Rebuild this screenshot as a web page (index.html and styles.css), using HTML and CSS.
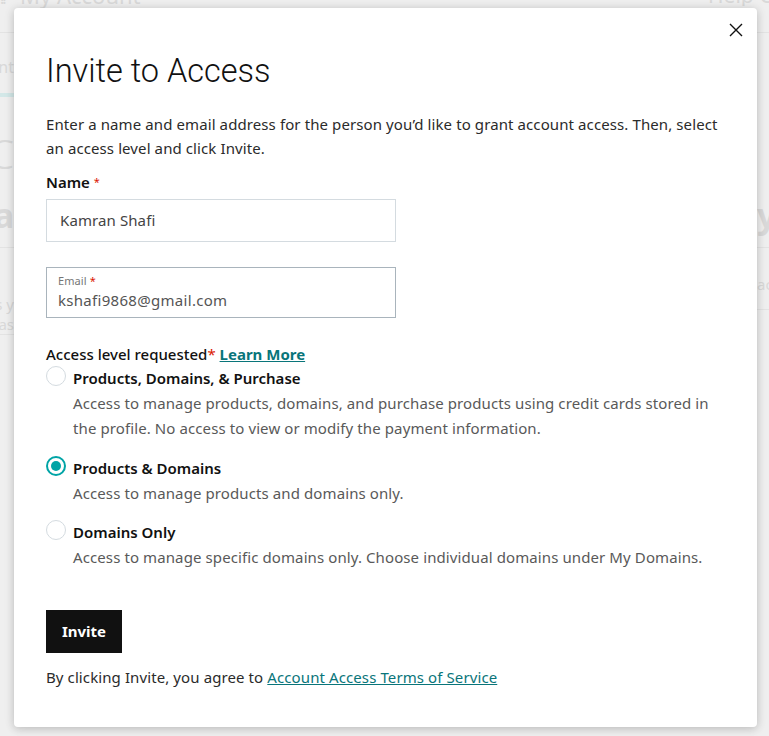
FILE: index.html
```html
<!DOCTYPE html>
<html lang="en">
<head>
<meta charset="utf-8">
<title>Invite to Access</title>
<link rel="stylesheet" href="styles.css">
</head>
<body>
<div class="page" aria-hidden="true">
  <header class="topbar">
    <div class="brand"><span class="dots">⁞⁞</span><span class="brand-text">My Account</span></div>
    <div class="help"><span>Help Center</span></div>
  </header>
  <div class="bg-body">
    <div class="bg-col bg-left">
      <div class="bg-tab"><span class="tab-text">Account</span></div>
      <div class="bg-h1"><span>ACCOUNT AC</span></div>
      <div class="bg-h2"><span>Delegate ca</span></div>
      <div class="bg-text"><span>Gives y</span><span>please contact your leas</span></div>
    </div>
    <div class="bg-col bg-right">
      <div class="bg-spacer"></div>
      <div class="bg-h2"><span>your</span></div>
      <div class="bg-text short"><span>access</span></div>
    </div>
  </div>
</div>

<div class="modal" role="dialog" aria-labelledby="title">
  <button class="close" aria-label="Close">
    <svg width="14" height="14" viewBox="0 0 14 14"><path d="M1 1 L13 13 M13 1 L1 13" stroke="#111" stroke-width="1.4" fill="none"/></svg>
  </button>
  <h1 id="title" class="title">Invite to Access</h1>
  <p class="intro">Enter a name and email address for the person you’d like to grant account access. Then, select an access level and click Invite.</p>

  <label class="field-label">Name <span class="req">*</span></label>
  <div class="input name-input">Kamran Shafi</div>

  <div class="input email-input">
    <span class="float-label">Email <span class="req">*</span></span>
    <span class="value">kshafi9868@gmail.com</span>
  </div>

  <div class="access-label">Access level requested<span class="req big">*</span> <a class="link strong" href="#">Learn More</a></div>

  <div class="options">
    <div class="option">
      <span class="radio"></span>
      <div class="opt-text">
        <div class="opt-title">Products, Domains, &amp; Purchase</div>
        <div class="opt-desc">Access to manage products, domains, and purchase products using credit cards stored in the profile. No access to view or modify the payment information.</div>
      </div>
    </div>
    <div class="option">
      <span class="radio checked"></span>
      <div class="opt-text">
        <div class="opt-title">Products &amp; Domains</div>
        <div class="opt-desc">Access to manage products and domains only.</div>
      </div>
    </div>
    <div class="option">
      <span class="radio"></span>
      <div class="opt-text">
        <div class="opt-title">Domains Only</div>
        <div class="opt-desc">Access to manage specific domains only. Choose individual domains under My Domains.</div>
      </div>
    </div>
  </div>

  <button class="invite">Invite</button>
  <p class="terms">By clicking Invite, you agree to <a class="link" href="#">Account Access Terms of Service</a></p>
</div>
</body>
</html>
```

FILE: styles.css
```css
* { box-sizing: border-box; }
html, body { margin: 0; padding: 0; }
body {
  width: 769px;
  height: 736px;
  overflow: hidden;
  background: #efefef;
  font-family: "Noto Sans", "Liberation Sans", sans-serif;
  position: relative;
}

/* faded background page */
.page { color: #d9d9d9; width: 769px; height: 736px; overflow: hidden; }
.topbar {
  height: 33px;
  border-bottom: 1px solid #e3e3e3;
  display: flex;
  justify-content: space-between;
  align-items: flex-end;
  overflow: hidden;
}
.brand { display: flex; align-items: flex-end; font-size: 22px; line-height: 22px; margin-bottom: 26px; white-space: nowrap; }
.dots { width: 20px; font-size: 16px; line-height: 16px; letter-spacing: -2px; }
.help { width: 61px; overflow: hidden; white-space: nowrap; font-size: 21px; line-height: 22px; margin-bottom: 26px; }

.bg-body { display: flex; justify-content: space-between; }
.bg-col { overflow: hidden; white-space: nowrap; }
.bg-left { width: 14px; }
.bg-right { width: 12px; }
.bg-col > div { display: flex; justify-content: flex-end; }
.bg-right > div { justify-content: flex-start; }

.bg-tab { height: 64px; align-items: flex-end; }
.tab-text { font-size: 16px; line-height: 20px; padding-bottom: 16px; margin-bottom: 0; border-bottom: 4px solid #d3e8e8; }
.bg-h1 { height: 72px; align-items: center; font-size: 40px; font-weight: 300; padding-top: 40px; }
.bg-h2 { height: 79px; align-items: center; font-size: 34px; font-weight: 700; padding-top: 14px; border-bottom: 1px solid #e3e3e3; }
.bg-text { height: 87px; flex-direction: column; align-items: flex-end; font-size: 15px; line-height: 20px; padding-top: 22px; border-bottom: 1px solid #e3e3e3; }
.bg-spacer { height: 136px; }
.bg-right .bg-text { align-items: flex-start; height: 62px; padding-top: 26px; }

/* modal */
.modal {
  position: absolute;
  left: 14px;
  top: 8px;
  width: 743px;
  height: 719px;
  background: #fff;
  border-radius: 4px;
  box-shadow: 0 2px 8px rgba(0,0,0,0.18), 0 0 14px rgba(0,0,0,0.06);
  padding: 37px 32px 0 32px;
  color: #2b2b2b;
}
.close {
  position: absolute;
  right: 14px;
  top: 15px;
  background: none;
  border: 0;
  padding: 0;
  width: 14px;
  height: 14px;
  display: block;
}
.close svg { display: block; }
.title {
  margin: 0;
  font-family: Roboto, "Noto Sans", sans-serif;
  font-weight: 300;
  font-size: 32.5px;
  line-height: 52px;
  color: #111;
}
.intro {
  margin: 15px 0 0 0;
  font-size: 15px;
  line-height: 24px;
  letter-spacing: 0.1px;
}
.field-label {
  display: block;
  margin-top: 10px;
  font-size: 15px;
  font-weight: 600;
  line-height: 24px;
  color: #111;
}
.req { color: #db1802; font-size: 11px; vertical-align: top; font-weight: 400; }
.req.big { font-size: 15px; vertical-align: baseline; }
.input {
  width: 350px;
  border: 1px solid #d4dbe0;
  padding: 0 13px;
  font-size: 15px;
  color: #444;
  letter-spacing: 0.1px;
}
.name-input {
  margin-top: 5px;
  height: 43px;
  line-height: 41px;
}
.email-input {
  margin-top: 25px;
  height: 51px;
  border-color: #a9b4bc;
  display: flex;
  flex-direction: column;
  padding: 5px 11px 0;
}
.float-label { font-size: 11px; color: #767676; line-height: 16px; }
.value { font-size: 15px; line-height: 22px; color: #555; letter-spacing: 0.3px; }

.access-label {
  margin-top: 26px;
  font-size: 15px;
  font-weight: 500;
  line-height: 20px;
  color: #111;
}
.link { color: #09757a; text-decoration: underline; }
.link.strong { font-weight: 700; }

.options { display: flex; flex-direction: column; gap: 14.5px; margin-top: 2px; }
.option { display: flex; gap: 7px; }
.radio {
  width: 20px;
  height: 20px;
  flex: none;
  border: 1px solid #d4dbe0;
  border-radius: 50%;
  background: #fff;
  position: relative;
}
.radio.checked { border: 2px solid #00a4a6; }
.radio.checked::after {
  content: "";
  position: absolute;
  left: 3px; top: 3px;
  width: 10px; height: 10px;
  border-radius: 50%;
  background: #00a4a6;
}
.opt-title { font-size: 15px; font-weight: 600; line-height: 25px; color: #111; }
.opt-desc { font-size: 15px; line-height: 25px; color: #595959; letter-spacing: 0.1px; }

.invite {
  margin-top: 39.5px;
  display: block;
  width: 76px;
  height: 43px;
  background: #111;
  color: #fff;
  border: 0;
  border-radius: 0;
  font-family: "Noto Sans", sans-serif;
  font-size: 15px;
  font-weight: 700;
  padding: 0;
}
.terms { margin: 13px 0 0 0; font-size: 15px; line-height: 22px; color: #2b2b2b; letter-spacing: 0.1px; }
```
